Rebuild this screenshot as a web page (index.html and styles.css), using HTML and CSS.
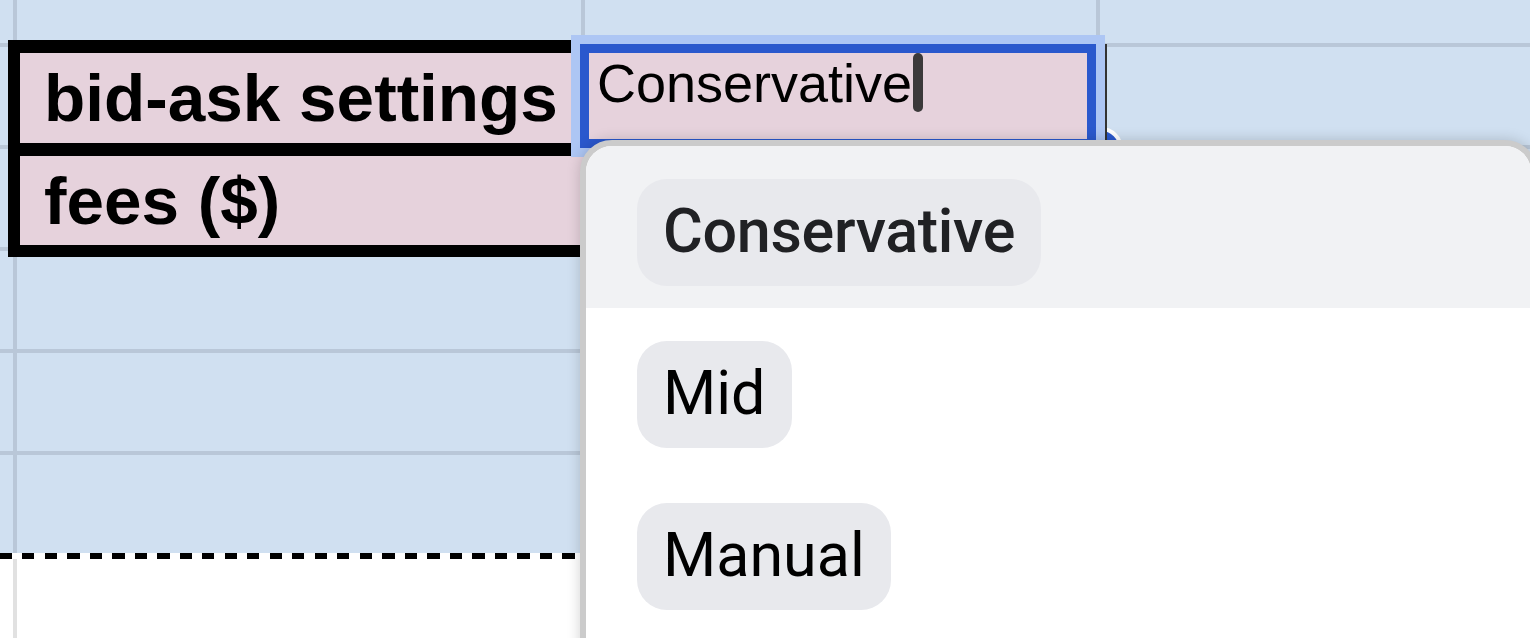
FILE: index.html
```html
<!DOCTYPE html>
<html lang="en">
<head>
    <meta charset="UTF-8">
    <meta name="viewport" content="width=device-width, initial-scale=1.0">
    <title>bid-ask settings</title>
    <link rel="stylesheet" href="styles.css">
</head>
<body>
    <div class="sheet">
        <div class="grid">
            <div class="frame">
                <div class="label">bid-ask settings</div>
                <div class="label">fees ($)</div>
            </div>

            <!-- row 1 -->
            <div class="cell"></div>
            <div class="cell"></div>
            <div class="cell"></div>
            <div class="cell"></div>

            <!-- row 2: the cell being edited -->
            <div class="cell"></div>
            <div class="cell editing">
                <span class="handle"></span>
                <div class="editor">Conservative<span class="caret"></span></div>
            </div>
            <div class="cell"></div>

            <!-- row 3 -->
            <div class="cell"></div>
            <div class="cell"></div>
            <div class="cell"></div>

            <!-- rows 4 - 6 -->
            <div class="cell"></div>
            <div class="cell"></div>
            <div class="cell"></div>
            <div class="cell"></div>
            <div class="cell"></div>
            <div class="cell"></div>
            <div class="cell"></div>
            <div class="cell"></div>
            <div class="cell"></div>
            <div class="cell"></div>
            <div class="cell"></div>
            <div class="cell"></div>
        </div>

        <div class="cut"></div>

        <div class="grid rest">
            <div class="cell"></div>
            <div class="cell"></div>
            <div class="cell"></div>
            <div class="cell"></div>
        </div>

        <div class="dropdown">
            <div class="option active"><span class="chip">Conservative</span></div>
            <div class="option"><span class="chip">Mid</span></div>
            <div class="option"><span class="chip">Manual</span></div>
        </div>
    </div>
</body>
</html>
```

FILE: styles.css
```css
body {
    margin: 0;
    background-color: #fff;
    font-family: "Liberation Sans", Arial, sans-serif;
}
.sheet {
    position: relative;
    width: 1530px;
    height: 638px;
    overflow: hidden;
}
.grid {
    display: grid;
    grid-template-columns: 13px 564px 511px 1fr;
    grid-template-rows: 43px repeat(5, 98px);
    gap: 4px;
    background-color: #b9c7d8;
}
.cell {
    background-color: #d0e0f1;
}
.cut {
    height: 6px;
    background: repeating-linear-gradient(90deg, #000 0 12px, #fff 12px 22.5px);
}
.grid.rest {
    grid-template-rows: 80px;
    background-color: #e1e1e1;
}
.grid.rest .cell {
    background-color: #fff;
}

.frame {
    grid-column: 2;
    grid-row: 2 / 4;
    margin: -7px -10px -10px -9px;
    position: relative;
    z-index: 1;
    display: flex;
    flex-direction: column;
    border-left: 12px solid #000;
    border-top: 13px solid #000;
    border-bottom: 12px solid #000;
}
.label {
    flex: 1;
    display: flex;
    align-items: center;
    padding-left: 24px;
    background-color: #e6d2dc;
    font-size: 67.5px;
    font-weight: bold;
    color: #000;
}
.label + .label {
    border-top: 13px solid #000;
}

.editing {
    position: relative;
}
.editor {
    position: absolute;
    top: -3px;
    left: -5px;
    right: 0;
    bottom: -3px;
    z-index: 2;
    padding: 0 8px;
    border: 9px solid #2a58cd;
    box-shadow: 0 0 0 9px #adc6f4, 11px 0 0 0 #333;
    background-color: #e6d2dc;
    font-size: 54px;
    line-height: 60px;
    color: #000;
    white-space: nowrap;
}
.caret {
    display: inline-block;
    vertical-align: top;
    width: 10px;
    height: 59px;
    margin-left: 1px;
    border-radius: 5px;
    background-color: #3b393a;
}
.handle {
    position: absolute;
    right: -27px;
    bottom: -26px;
    z-index: 1;
    width: 36px;
    height: 36px;
    border: 4px solid #fff;
    border-radius: 50%;
    background-color: #2a58cd;
}

.dropdown {
    position: absolute;
    left: 580px;
    top: 140px;
    z-index: 3;
    box-sizing: border-box;
    width: 957px;
    height: 520px;
    border: 6px solid #cbcbcb;
    border-radius: 32px 32px 0 0;
    background-color: #fff;
    box-shadow: 0 0 14px rgba(0, 0, 0, 0.18);
    overflow: hidden;
    font-family: Roboto, "Noto Sans", sans-serif;
}
.option {
    padding: 33px 0 22px 51px;
}
.option.active {
    background-color: #f1f2f4;
}
.chip {
    display: inline-block;
    padding: 16px 26px 19px;
    border-radius: 30px;
    background-color: #e8e9ed;
    font-size: 61px;
    line-height: 72px;
    color: #000;
}
.option.active .chip {
    font-weight: 500;
    letter-spacing: -0.3px;
    color: #202124;
}
```
